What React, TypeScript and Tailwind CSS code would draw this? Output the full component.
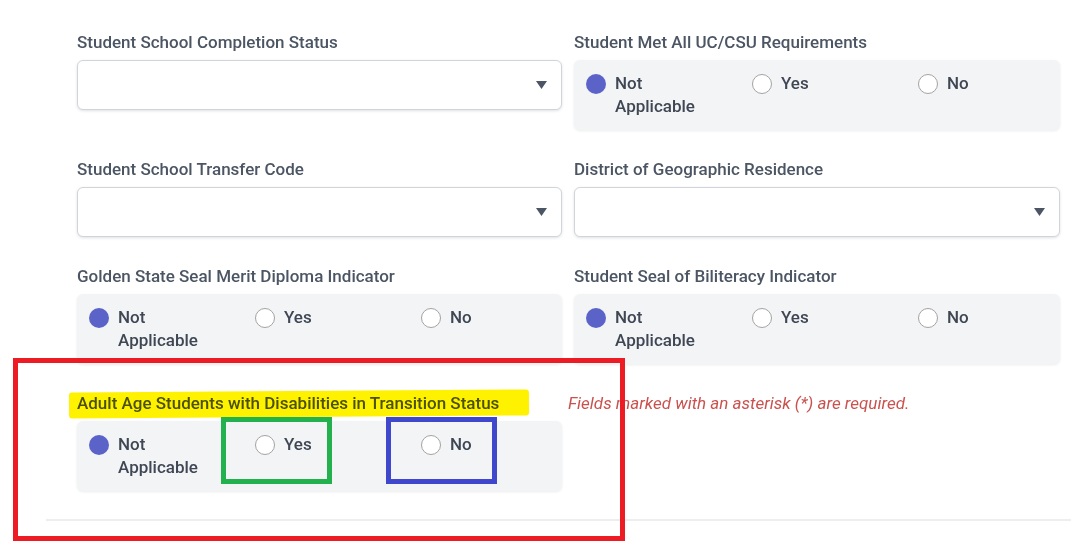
import React from "react"

type Option = { label: React.ReactNode; checked?: boolean }

const OPTIONS: Option[] = [
  { label: <>Not<br />Applicable</>, checked: true },
  { label: "Yes" },
  { label: "No" },
]

function Label({ children }: { children: React.ReactNode }) {
  return (
    <div className="text-[17px] leading-5 font-medium text-[#4b5563] mb-2 whitespace-nowrap">
      {children}
    </div>
  )
}

function Select() {
  return (
    <div className="h-[50px] bg-white border border-[#d1d5db] rounded-md shadow-[0_1px_3px_rgba(0,0,0,0.12)] flex items-center justify-end pr-[14px]">
      <svg width="11" height="8" viewBox="0 0 11 8">
        <path d="M0 0 L11 0 L5.5 8 Z" fill="#4b5563" />
      </svg>
    </div>
  )
}

function RadioGroup() {
  return (
    <div className="h-[70px] bg-[#f3f4f6] rounded-md shadow-[0_1px_3px_rgba(0,0,0,0.08)] px-3 pt-3 grid grid-cols-[166px_166px_1fr]">
      {OPTIONS.map((o, i) => (
        <div key={i} className="flex items-start gap-[9px]">
          {o.checked ? (
            <span className="mt-[2px] w-5 h-5 rounded-full bg-[#5b63c8] shrink-0" />
          ) : (
            <span className="mt-[2px] w-5 h-5 rounded-full bg-white border-[1.5px] border-[#a3a3a3] shrink-0" />
          )}
          <span className="text-[17px] leading-[23px] font-medium text-[#3f4654]">{o.label}</span>
        </div>
      ))}
    </div>
  )
}

export default function App() {
  return (
    <div
      className="relative w-[1071px] h-[549px] bg-white overflow-hidden"
      style={{ fontFamily: "Roboto, 'Liberation Sans', sans-serif" }}
    >
      <div className="pl-[77px] pr-[11px] pt-8 grid grid-cols-[485px_486px] gap-x-3 gap-y-[29px] items-start">
        <div>
          <Label>Student School Completion Status</Label>
          <Select />
        </div>
        <div>
          <Label>Student Met All UC/CSU Requirements</Label>
          <RadioGroup />
        </div>

        <div>
          <Label>Student School Transfer Code</Label>
          <Select />
        </div>
        <div>
          <Label>District of Geographic Residence</Label>
          <Select />
        </div>

        <div>
          <Label>Golden State Seal Merit Diploma Indicator</Label>
          <RadioGroup />
        </div>
        <div>
          <Label>Student Seal of Biliteracy Indicator</Label>
          <RadioGroup />
        </div>

        <div>
          <div className="relative">
            <Label>Adult Age Students with Disabilities in Transition Status</Label>
            <span className="absolute left-[-8px] top-[-2px] w-[460px] h-[26px] rounded-[3px] bg-[#fff200] mix-blend-multiply -rotate-[0.4deg]" />
          </div>
          <RadioGroup />
        </div>
        <div className="-ml-1.5">
          <div className="text-[17px] leading-5 italic text-[#c9524f] whitespace-nowrap">
            Fields marked with an asterisk (*) are required.
          </div>
        </div>
      </div>

      <div className="ml-[46px] mt-[28px] h-[2px] bg-[#eeeeee]" />

      {/* annotation boxes */}
      <div className="absolute left-[13px] top-[358px] w-[612px] h-[183px] border-[5px] border-[#ed1c24]" />
      <div className="absolute left-[221px] top-[417px] w-[111px] h-[67px] border-[5px] border-[#22b14c]" />
      <div className="absolute left-[386px] top-[417px] w-[111px] h-[67px] border-[5px] border-[#3f48cc]" />
    </div>
  )
}
